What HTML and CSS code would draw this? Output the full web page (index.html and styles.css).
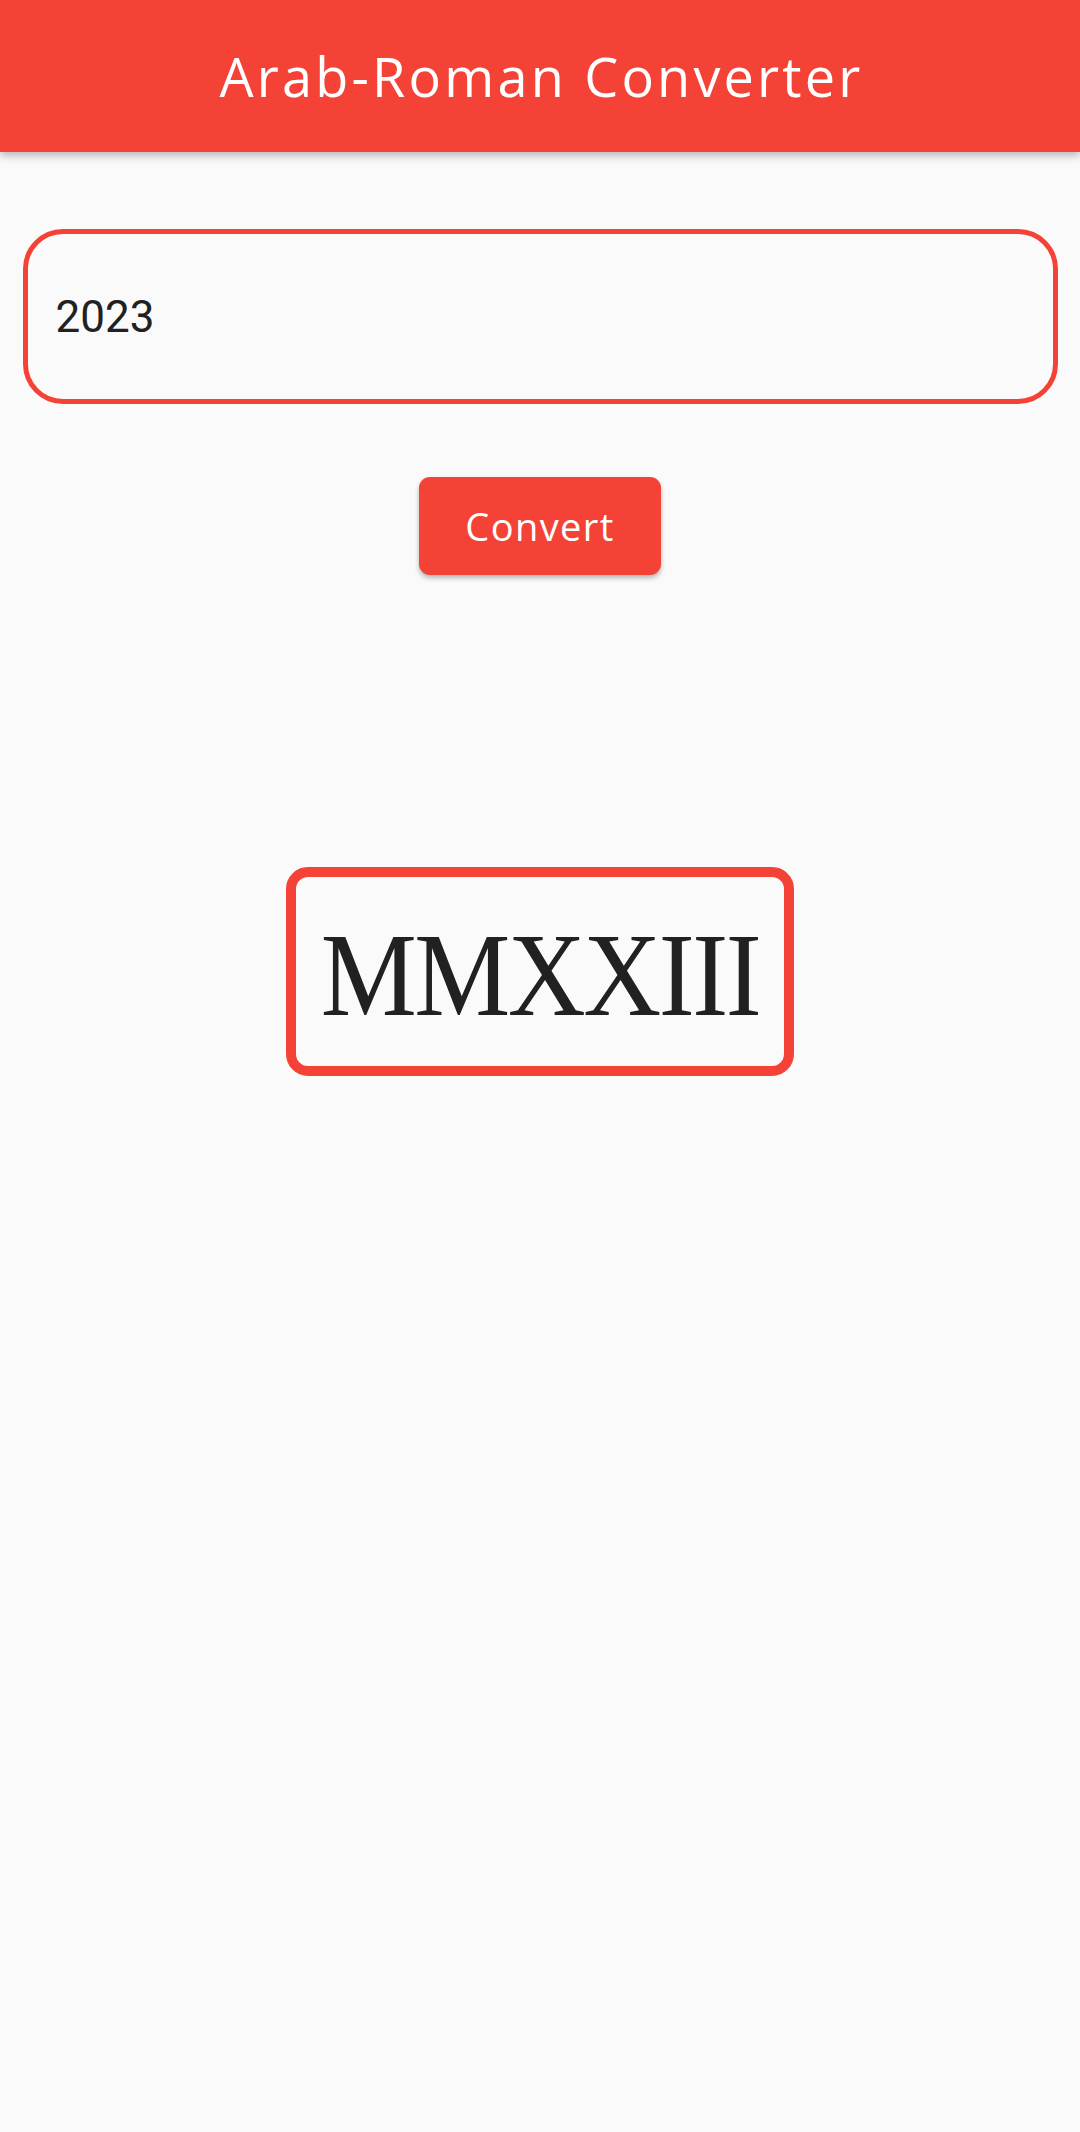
FILE: index.html
```html
<!DOCTYPE html>
<html lang="en">
<head>
<meta charset="utf-8">
<title>Arab-Roman Converter</title>
<link rel="stylesheet" href="styles.css">
</head>
<body>
<header class="app-bar">
  <h1 class="app-title">Arab-Roman Converter</h1>
</header>
<main class="content">
  <div class="field">
    <input class="field-input" type="text" value="2023">
  </div>
  <div class="actions">
    <button class="convert-btn" type="button">Convert</button>
  </div>
  <div class="result-wrap">
    <div class="result"><span class="result-text">MMXXIII</span></div>
  </div>
</main>
</body>
</html>
```

FILE: styles.css
```css
html, body {
  margin: 0;
  padding: 0;
  background: #fafafa;
}
body {
  width: 1080px;
  min-height: 2132px;
  font-family: "Open Sans", "Noto Sans", sans-serif;
}
.app-bar {
  height: 152px;
  background: #f44336;
  display: flex;
  align-items: center;
  justify-content: center;
  box-shadow: 0 3px 9px rgba(0, 0, 0, 0.3);
  position: relative;
  z-index: 1;
}
.app-title {
  margin: 0;
  color: #ffffff;
  font-family: "Open Sans", "Noto Sans", sans-serif;
  font-weight: 400;
  font-size: 54px;
  letter-spacing: 3.2px;
  line-height: 1;
  padding-left: 3px;
}
.content {
  padding: 0 22.5px;
  display: flex;
  flex-direction: column;
}
.field {
  margin-top: 77px;
}
.field-input {
  box-sizing: border-box;
  width: 100%;
  height: 175px;
  border: 5.5px solid #f44336;
  border-radius: 40px;
  background: transparent;
  padding: 0 0 0 28px;
  font-family: Roboto, "Liberation Sans", sans-serif;
  font-size: 44px;
  color: #212121;
  outline: none;
}
.actions {
  display: flex;
  justify-content: center;
  margin-top: 73px;
}
.convert-btn {
  box-sizing: border-box;
  width: 242px;
  height: 98px;
  border: none;
  border-radius: 11px;
  background: #f44336;
  color: #ffffff;
  font-family: "Open Sans", "Noto Sans", sans-serif;
  font-size: 38px;
  letter-spacing: 1.4px;
  padding: 0;
  box-shadow: 0 3px 5px rgba(0, 0, 0, 0.28);
}
.result-wrap {
  display: flex;
  justify-content: center;
  margin-top: 292px;
}
.result {
  box-sizing: border-box;
  width: 508px;
  height: 209px;
  border: 10.5px solid #f44336;
  border-radius: 22px;
  display: flex;
  align-items: center;
  justify-content: center;
  padding-top: 8px;
  padding-left: 0;
}
.result-text {
  display: inline-block;
  font-family: "Liberation Serif", "DejaVu Serif", serif;
  font-size: 108px;
  line-height: 1;
  letter-spacing: -2.5px;
  color: #212121;
  transform: scaleY(1.09);
}
```
